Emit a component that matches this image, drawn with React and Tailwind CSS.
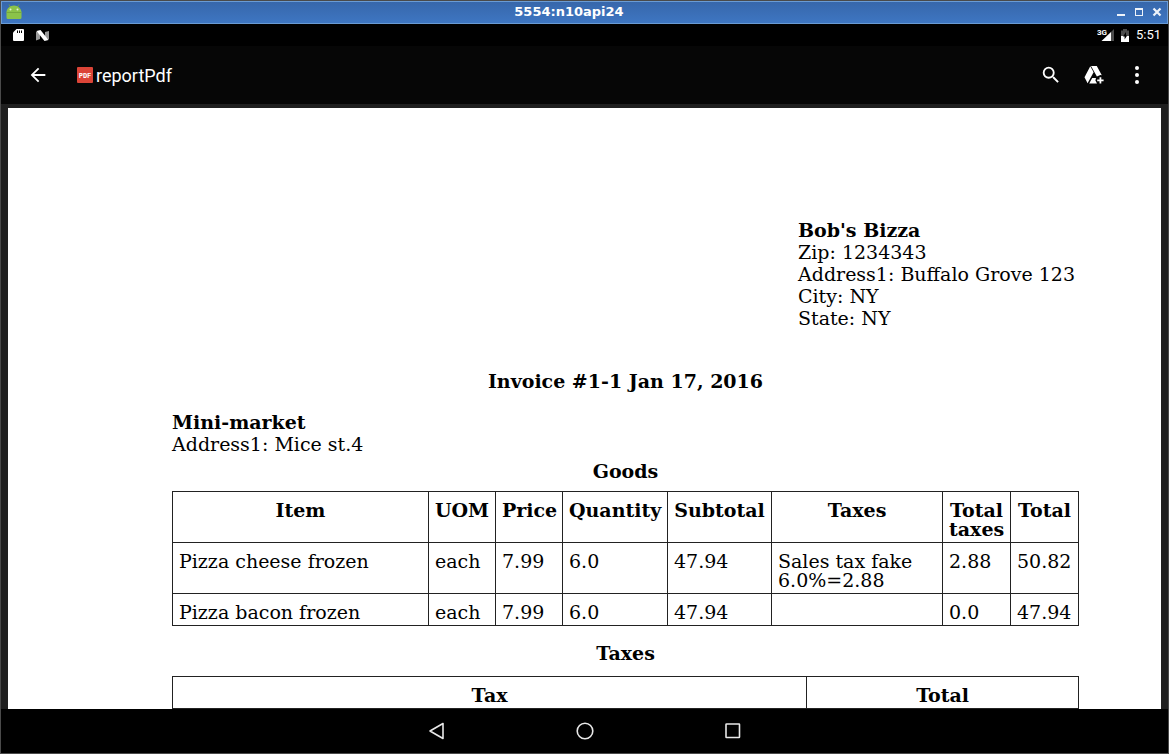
import React from "react";

const goods = [
  ["Pizza cheese frozen", "each", "7.99", "6.0", "47.94", "Sales tax fake 6.0%=2.88", "2.88", "50.82"],
  ["Pizza bacon frozen", "each", "7.99", "6.0", "47.94", "", "0.0", "47.94"],
];

const goodsColumns = [
  ["Item", ""],
  ["UOM", "w-[67px]"],
  ["Price", "w-[67px]"],
  ["Quantity", "w-[105px]"],
  ["Subtotal", "w-[104px]"],
  ["Taxes", "w-[171px]"],
  ["Total taxes", "w-[68px]"],
  ["Total", "w-[68px]"],
];

const cell = "border border-[#222] px-[6px] pt-[9px] pb-[3px] align-top leading-[19px]";

function TitleBar() {
  return (
    <header className="flex h-[23px] shrink-0 items-center justify-between border border-[#6a9bd4] bg-linear-to-b from-[#3767ab] to-[#3e76c2] pb-[2px] pl-1 pr-[5px]">
      <svg className="h-4 w-4" viewBox="0 0 16 16" aria-hidden="true">
        <path d="M3 0.5 4.5 3M13 0.5 11.500 3" stroke="#6f9a4a" strokeWidth="1" />
        <path d="M0.500 8.500C0.500 4.500 4 1.500 8 1.500S15.500 4.500 15.500 8.500V13.500a1.500 1.500 0 0 1-1.500 1.500H2A1.500 1.500 0 0 1 0.500 13.500Z" fill="#8bc34a" />
        <path d="M0.500 8.500h15" stroke="#76a93d" strokeWidth="1" />
        <circle cx="4.500" cy="5.500" r="1" fill="#e6f2d8" />
        <circle cx="11.500" cy="5.500" r="1" fill="#e6f2d8" />
      </svg>
      <h1 className="font-['DejaVu_Sans',sans-serif] text-[13px] font-bold leading-4 text-white">5554:n10api24</h1>
      <div className="flex items-center justify-end gap-[8px]">
        <button aria-label="Minimize" className="h-[10px] w-[10px]">
          <svg viewBox="0 0 10 10" className="h-[10px] w-[10px]"><path d="M1 7h8v2H1z" fill="#eef3fa" /></svg>
        </button>
        <button aria-label="Maximize" className="h-[10px] w-[10px]">
          <svg viewBox="0 0 10 10" className="h-[10px] w-[10px]"><path d="M1 1h8v8H1zM2 3v5h6V3z" fill="#eef3fa" fillRule="evenodd" /></svg>
        </button>
        <button aria-label="Close" className="h-[10px] w-[10px]">
          <svg viewBox="0 0 10 10" className="h-[10px] w-[10px]"><path d="M1.500 1.500l7 7M8.500 1.500l-7 7" stroke="#eef3fa" strokeWidth="2.200" /></svg>
        </button>
      </div>
    </header>
  );
}

function StatusBar() {
  return (
    <div className="flex h-[22px] shrink-0 items-center justify-between bg-black pl-3 pr-[7px] text-white">
      <div className="flex items-center gap-3">
        <svg viewBox="0 0 11 12" className="h-3 w-[11px]" aria-hidden="true">
          <path d="M3.500 0H10a1 1 0 0 1 1 1v10a1 1 0 0 1-1 1H1a1 1 0 0 1-1-1V3.500Z" fill="#fff" />
          <path d="M4.500 1.500v2.500M6.500 1.500v2.500M8.500 1.500v2.500" stroke="#000" strokeWidth="1" />
        </svg>
        <svg viewBox="0 0 13 11" className="h-[11px] w-[13px]" aria-hidden="true">
          <path d="M0 1.500 4 3v6L0 10.500ZM9 2l4-1v8.500L9 8Z" fill="#9a9a9a" />
          <path d="M0.500 1 4.500 0 12.500 10 8.500 11Z" fill="#fff" />
        </svg>
      </div>
      <div className="flex items-center">
        <svg viewBox="0 0 18 14" className="h-[14px] w-[18px]" role="img" aria-label="3G signal">
          <path d="M17 1v12h-3V4Z" fill="#4d4d4d" />
          <path d="M14 4v9H4.500Z" fill="#fff" />
          <text x="0" y="7" fill="#fff" className="font-['Roboto',sans-serif] text-[8px] font-bold">3G</text>
        </svg>
        <svg viewBox="0 0 8 13" className="ml-[6px] h-[13px] w-2" role="img" aria-label="Battery">
          <path d="M2 0h4v1.500H8V13H0V1.500h2Z" fill="#4d4d4d" />
          <path d="M0 7h8v6H0Z" fill="#fff" />
          <path d="M5 3 2 7.500h1.600V10.500L6.200 6.500H5Z" fill="#000" />
        </svg>
        <time className="ml-[7px] font-['Roboto',sans-serif] text-[13px] leading-4">5:51</time>
      </div>
    </div>
  );
}

function AppBar() {
  return (
    <div className="flex h-[58px] shrink-0 items-center bg-[#060606] pl-[26px] pr-5 text-white">
      <button aria-label="Back" className="h-[22px] w-[22px]">
        <svg viewBox="0 0 24 24" className="h-[22px] w-[22px]" fill="currentColor">
          <path d="M20 11H7.830l5.590-5.590L12 4l-8 8 8 8 1.410-1.410L7.830 13H20v-2z" />
        </svg>
      </button>
      <svg viewBox="0 0 16 16" className="ml-7 h-4 w-4" aria-hidden="true">
        <rect width="16" height="16" rx="1" fill="#db4437" />
        <text x="8" y="11" textAnchor="middle" fill="#fff" className="font-['DejaVu_Sans_Mono',monospace] text-[7px] font-bold">PDF</text>
      </svg>
      <h2 className="ml-[3px] pt-[2px] font-['Roboto',sans-serif] text-[18px] leading-6">reportPdf</h2>
      <div className="ml-auto flex items-center gap-[21px]">
        <button aria-label="Search" className="h-[22px] w-[22px]">
          <svg viewBox="0 0 24 24" className="h-[22px] w-[22px]" fill="currentColor">
            <path d="M15.500 14h-.79l-.28-.27A6.471 6.471 0 0 0 16 9.500 6.500 6.500 0 1 0 9.500 16c1.610 0 3.090-.59 4.230-1.570l.27.28v.79l5 4.990L20.490 19l-4.990-5zm-6 0C7.010 14 5 11.990 5 9.500S7.010 5 9.500 5 14 7.010 14 9.500 11.990 14 9.500 14z" />
          </svg>
        </button>
        <button aria-label="Add to Drive" className="h-[22px] w-[22px]">
          <svg viewBox="0 0 22 22" className="h-[22px] w-[22px]" fill="currentColor">
            <path d="M7.300 2.300 1.500 13.200 4.600 19.200 10.600 8.200Z" />
            <path d="M8 2h5.800l5 9.200-1.500-.2-3.400 1.400Z" />
            <path d="M9.200 14H13l-.6 2.500L14 19.500H6.200Z" />
            <path d="M16.500 13.300h1.800v2.200h2.300v1.800h-2.300v2.300h-1.800v-2.300h-2.300v-1.800h2.300Z" />
          </svg>
        </button>
        <button aria-label="More options" className="h-[22px] w-[22px]">
          <svg viewBox="0 0 22 22" className="h-[22px] w-[22px]" fill="currentColor">
            <circle cx="11" cy="4" r="2" />
            <circle cx="11" cy="11" r="2" />
            <circle cx="11" cy="18" r="2" />
          </svg>
        </button>
      </div>
    </div>
  );
}

function Invoice() {
  return (
    <article className="min-h-full bg-white pb-20 pl-[164px] pr-[82px] pt-[111px] font-['DejaVu_Serif',serif] text-[19px] leading-[22px] text-black">
      <div className="flex justify-end">
        <address className="w-[281px] not-italic">
          <strong className="block">Bob's Bizza</strong>
          <p>Zip: 1234343</p>
          <p>Address1: Buffalo Grove 123</p>
          <p>City: NY</p>
          <p>State: NY</p>
        </address>
      </div>
      <h3 className="mt-[41px] text-center font-bold">Invoice #1-1 Jan 17, 2016</h3>
      <div className="mt-[19px]">
        <strong className="block">Mini-market</strong>
        <p>Address1: Mice st.4</p>
      </div>
      <table className="mt-[5px] w-full table-fixed border-collapse">
        <caption className="pb-[9px] font-bold">Goods</caption>
        <thead>
          <tr>
            {goodsColumns.map(([name, width]) => (
              <th key={name} scope="col" className={`${cell} ${width}`}>{name}</th>
            ))}
          </tr>
        </thead>
        <tbody>
          {goods.map((row) => (
            <tr key={row[0]}>
              {row.map((value, i) => (
                <td key={i} className={cell}>{value}</td>
              ))}
            </tr>
          ))}
        </tbody>
      </table>
      <table className="mt-4 w-full table-fixed border-collapse">
        <caption className="pb-3 font-bold">Taxes</caption>
        <thead>
          <tr>
            <th scope="col" className={`${cell} w-[70%]`}>Tax</th>
            <th scope="col" className={cell}>Total</th>
          </tr>
        </thead>
      </table>
    </article>
  );
}

function NavBar() {
  return (
    <nav className="flex h-11 shrink-0 items-center justify-center gap-[128px] bg-black text-[#e8e8e8]">
      <button aria-label="Back" className="h-5 w-5">
        <svg viewBox="0 0 20 20" className="h-5 w-5" fill="none" stroke="currentColor" strokeWidth="1.600" strokeLinejoin="round">
          <path d="M16 2.500v15L3 10Z" />
        </svg>
      </button>
      <button aria-label="Home" className="h-5 w-5">
        <svg viewBox="0 0 20 20" className="h-5 w-5" fill="none" stroke="currentColor" strokeWidth="1.600">
          <circle cx="10" cy="10" r="7.800" />
        </svg>
      </button>
      <button aria-label="Recent apps" className="h-5 w-5">
        <svg viewBox="0 0 20 20" className="h-5 w-5" fill="none" stroke="currentColor" strokeWidth="1.600">
          <rect x="3" y="3" width="13.500" height="13.500" rx="0.500" />
        </svg>
      </button>
    </nav>
  );
}

export default function App() {
  return (
    <div className="flex h-screen flex-col border border-[#4a4a4a] bg-black">
      <TitleBar />
      <StatusBar />
      <AppBar />
      <main className="min-h-0 flex-1 overflow-hidden bg-[#1f1f1f] px-[7px] pt-1">
        <Invoice />
      </main>
      <NavBar />
    </div>
  );
}
